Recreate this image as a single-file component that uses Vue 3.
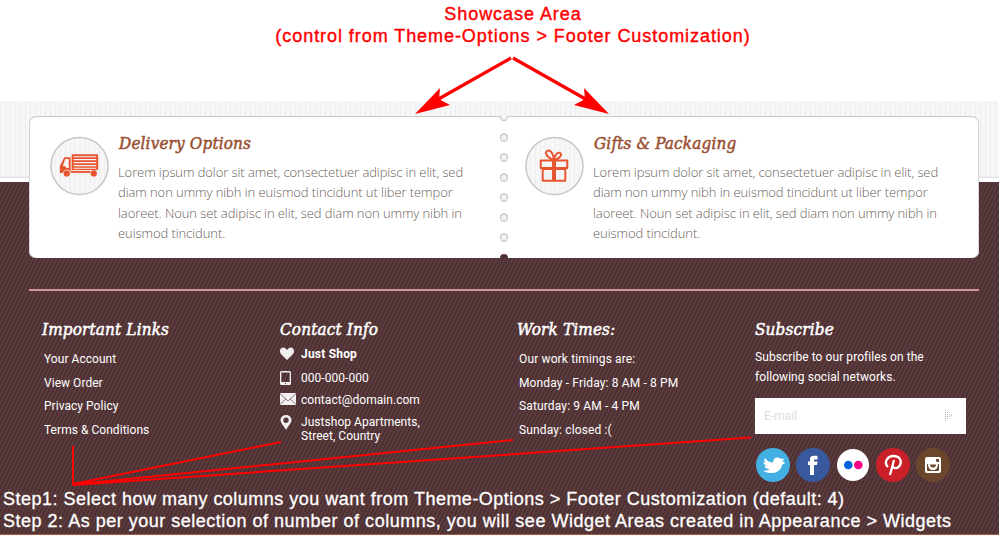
<script setup>
const features = [
  {
    icon: 'truck',
    title: 'Delivery Options',
  },
  {
    icon: 'gift',
    title: 'Gifts & Packaging',
  },
]
const copy = [
  'Lorem ipsum dolor sit amet, consectetuer adipisc in elit, sed',
  'diam non ummy nibh in euismod tincidunt ut liber tempor',
  'laoreet. Noun set adipisc in elit, sed diam non ummy nibh in',
  'euismod tincidunt.',
]
const links = ['Your Account', 'View Order', 'Privacy Policy', 'Terms & Conditions']
const times = ['Our work timings are:', 'Monday - Friday: 8 AM - 8 PM', 'Saturday: 9 AM - 4 PM', 'Sunday: closed :(']
</script>

<template>
  <div class="page">
    <header class="note">
      <p class="n1">Showcase Area</p>
      <p class="n2">(control from Theme-Options &gt; Footer Customization)</p>
    </header>

    <section class="band">
      <svg class="texture" width="999" height="434" aria-hidden="true">
        <defs>
          <pattern id="ribs" width="10" height="8" patternUnits="userSpaceOnUse">
            <rect width="10" height="8" fill="#f6f6f6" />
            <path d="M.5 0v8M5.5 0v8" stroke="#eeeeee" />
            <path d="M1 2l4 4M6 5l3 3M7 0l3 2" stroke="#fbfbfb" />
          </pattern>
          <pattern id="twill" width="4" height="8" patternUnits="userSpaceOnUse">
            <rect width="4" height="8" fill="#4f3032" />
            <path d="M3 0h1v2h-1zM2 2h1v2h-1zM1 4h1v2h-1zM0 6h1v2h-1z" fill="#5d4042" />
            <path d="M2 0h1v2h-1zM1 2h1v2h-1zM0 4h1v2h-1zM3 6h1v2h-1z" fill="#57393b" />
          </pattern>
        </defs>
        <rect width="999" height="77" fill="url(#ribs)" />
        <rect y="75" width="999" height="1" fill="#eeeeee" />
        <rect y="76" width="999" height="1" fill="#e0e0e0" />
        <rect y="77" width="999" height="4" fill="#fff" />
        <rect y="81" width="999" height="352" fill="url(#twill)" />
        <rect y="433" width="999" height="1" fill="#a5583f" />
      </svg>

      <div class="card">
        <article v-for="f in features" :key="f.title" class="feature">
          <svg v-if="f.icon === 'truck'" class="badge" viewBox="0 0 60 60">
            <circle cx="30" cy="30" r="29" fill="url(#ribs)" stroke="#cbc4c4" stroke-width="1.5" />
            <g fill="#e95430">
              <path fill-rule="evenodd" d="M22 18.500Q22 18 22.500 18H48Q49 18 49 19V33Q49 34 48 34H22ZM24 20V21.200H47V20ZM24 23V24.200H47V23ZM24 26V27.200H47V26ZM24 29V30.200H47V29ZM24 31.700V32.700H47V31.700Z" />
              <path fill-rule="evenodd" d="M14.500 21H20Q21 21 21 22V35.500H20.500A4 4 0 0 0 13.500 36L12.500 37H10V30ZM15.500 23L13 30H15L17 32H19V23Z" />
              <path d="M21 35H41V37H21Z" /><circle cx="17" cy="37.500" r="3.200" /><circle cx="44.500" cy="37.500" r="3.200" />
            </g>
          </svg>
          <svg v-else class="badge" viewBox="0 0 60 60">
            <circle cx="30" cy="30" r="29" fill="url(#ribs)" stroke="#cbc4c4" stroke-width="1.5" />
            <g fill="none" stroke="#e95430" stroke-width="2" stroke-linejoin="round">
              <path d="M16 24.500H43V32H16ZM18 33V45H41V33Z" />
              <path d="M29.500 24V45" stroke-width="4" />
              <path d="M29.500 24C26 23 20.500 19 21.500 16C23.500 12 28.500 15 29.500 24C30 18 35 14.500 36.500 17.500C37.500 20.500 33 23 29.500 24" />
            </g>
          </svg>
          <div>
            <h2>{{ f.title }}</h2>
            <p class="copy"><span v-for="line in copy" :key="line">{{ line }}</span></p>
          </div>
        </article>
        <svg class="holes" width="10" height="142" viewBox="0 0 10 142" aria-hidden="true">
          <circle cx="5" cy="1" r="3.500" fill="#f3f3f3" stroke="#cdc9c9" stroke-width="1.300" />
          <circle v-for="n in 6" :key="n" cx="5" :cy="1.5 + n * 20" r="3.500" fill="#f6f2f2" stroke="#cac6c6" stroke-width="1.300" />
          <circle cx="5" cy="142" r="4" fill="#4e2f31" />
        </svg>
      </div>

      <div class="columns">
        <section>
          <h3>Important Links</h3>
          <ul class="list"><li v-for="l in links" :key="l"><span>{{ l }}</span></li></ul>
        </section>

        <section>
          <h3>Contact Info</h3>
          <ul class="contact">
            <li class="shop">
              <svg width="16" height="14" viewBox="0 0 16 14"><path d="M7 13L1 7C-2 3 2-1 5 1L7 3L9 1C12-1 16 3 13 7Z" fill="#f1efef" /></svg>
              <strong>Just Shop</strong>
            </li>
            <li class="phone">
              <svg width="16" height="14" viewBox="0 0 16 14"><path fill-rule="evenodd" d="M1.500 0H9.500Q11 0 11 1.500V12.500Q11 14 9.500 14H1.500Q0 14 0 12.500V1.500Q0 0 1.500 0ZM1.300 1.500V11H9.700V1.500ZM5 12V13H6V12Z" fill="#f1efef" /></svg>
              <span>000-000-000</span>
            </li>
            <li class="mail">
              <svg width="16" height="12" viewBox="0 0 16 12"><path d="M0 0H16V12H0Z" fill="#f1efef" /><path d="M0 .5L8 8L16 .5M0 11.500L6 6M16 11.500L10 6" fill="none" stroke="#8d7779" /></svg>
              <span>contact@domain.com</span>
            </li>
            <li class="place">
              <svg width="16" height="15" viewBox="0 0 16 15"><path fill-rule="evenodd" d="M6 15C4 11 .5 8 .5 5A5.500 5 0 0 1 11.500 5C11.500 8 8 11 6 15ZM6 2.500A2.700 2.700 0 1 0 6 7.900A2.700 2.700 0 1 0 6 2.500Z" fill="#f1efef" /></svg>
              <span>Justshop Apartments,<br />Street, Country</span>
            </li>
          </ul>
        </section>

        <section>
          <h3>Work Times:</h3>
          <ul class="list times"><li v-for="t in times" :key="t"><span>{{ t }}</span></li></ul>
        </section>

        <section>
          <h3>Subscribe</h3>
          <p class="lead">Subscribe to our profiles on the<br />following social networks.</p>
          <div class="field">
            <span>E-mail</span>
            <svg width="8" height="12" viewBox="0 0 8 12" fill="#b9b5b5">
              <path d="M0 0h1v1h-1zM0 2h1v1h-1zM2 2h1v1h-1zM0 4h1v1h-1zM2 4h1v1h-1zM4 4h1v1h-1zM0 6h1v1h-1zM2 6h1v1h-1zM4 6h1v1h-1zM0 8h1v1h-1zM2 8h1v1h-1zM0 10h1v1h-1zM6 5h1v1h-1z" />
            </svg>
          </div>
          <div class="social">
            <svg viewBox="0 0 34 34"><circle cx="17" cy="17" r="17" fill="#43afe3" /><path d="M9 10C11 13 14 14.500 17 14.500C17 9.500 22 8 25 11L28.500 10.500L26.500 13L29 15L26 17C25 24 16 28 6.500 22.500C10 23 12 22.500 13.500 21C10.500 21 9 20 8.500 18H11C8.500 17 7.500 16 7.500 14L9.500 14.500C8 13 8 11.500 9 10Z" fill="#fff" /></svg>
            <svg viewBox="0 0 34 34"><circle cx="17" cy="17" r="17" fill="#39599f" /><path d="M14 27V17H12V13.500H14V11C14 8 16 7.500 21.500 8V11.500H19C18 11.500 18 12 18 13.500H21.500L21 17H18V27Z" fill="#fff" /></svg>
            <svg viewBox="0 0 34 34"><circle cx="17" cy="17" r="16" fill="#fff" /><circle cx="12.300" cy="17" r="4.300" fill="#0063db" /><circle cx="22.300" cy="17" r="4.300" fill="#ff0084" /></svg>
            <svg viewBox="0 0 34 34"><circle cx="17" cy="17" r="17" fill="#cb2027" /><path d="M12 19C7.500 15 11 8 17.500 8C24 8 26 13 24 17C22 21 18 21 16.500 18M18 12L14 27" fill="none" stroke="#fff" stroke-width="2.300" /></svg>
            <svg viewBox="0 0 34 34">
              <circle cx="17" cy="17" r="17" fill="#6b462c" />
              <rect x="9" y="9" width="16" height="16" rx="2" fill="#fff" />
              <path d="M11 16H12.500A4.700 4.700 0 1 0 21.500 16H23V22Q23 23 22 23H12Q11 23 11 22ZM20 11H23V14H20Z" fill="#6b462c" />
              <circle cx="17" cy="17" r="4.800" fill="#fff" /><path d="M14 16.500A3 3 0 0 0 20 16.500Z" fill="#6b462c" />
            </svg>
          </div>
        </section>
      </div>

      <footer class="steps">
        <p>Step1: Select how many columns you want from Theme-Options &gt; Footer Customization (default: 4)</p>
        <p class="s2">Step 2: As per your selection of number of columns, you will see Widget Areas created in Appearance &gt; Widgets</p>
      </footer>
    </section>

    <svg class="arrows" width="999" height="535" viewBox="0 0 999 535" aria-hidden="true">
      <path d="M511 58L435 101M513 58L589 101" fill="none" stroke="#f00" stroke-width="3.200" />
      <path d="M415 114L440 88L439 99L450 105ZM609 114L584 88L585 99L574 105Z" fill="#f00" />
      <path d="M73 446V484L281 442M73 484.500L513 440M73 485L751 437.500" fill="none" stroke="#f00" stroke-width="2" />
    </svg>
  </div>
</template>

<style>
body { margin: 0; background: #fff; overflow: hidden; }
</style>

<style scoped>
* { box-sizing: border-box; }
p, h2, h3, ul { margin: 0; padding: 0; font-weight: normal; }
ul { list-style: none; }
svg { display: block; flex: none; }
.page { position: relative; width: 999px; height: 535px; overflow: hidden; font: 12px/14px Roboto, sans-serif; letter-spacing: .04px; white-space: nowrap; }
.note { height: 101px; padding-top: 3px; padding-left: 27px; text-align: center; font: 18px/22px "Liberation Sans", sans-serif; color: #f00; -webkit-text-stroke: .4px #f00; }
.n1 { letter-spacing: .95px; }
.n2 { letter-spacing: .94px; }
.band { position: relative; height: 434px; padding: 15px 20px 0 29px; }
.texture { position: absolute; left: 0; top: 0; }
.card { position: relative; display: grid; grid-template-columns: 475px 475px; width: 950px; height: 142px; border-top: 1px solid #cbc7c7; border-radius: 7px; background: #fff; box-shadow: inset 1px 0 0 #d8d4d4, inset -1px 0 0 #d8d4d4; }
.feature { display: flex; gap: 9px; padding: 19px 0 0 21px; }
.badge { width: 59px; height: 60px; }
h2, h3 { font: italic 17px/22px "DejaVu Serif Condensed", "DejaVu Serif", serif; font-stretch: condensed; letter-spacing: .14px; -webkit-text-stroke: .5px currentColor; }
h2 { margin-top: -4px; padding-left: 1px; color: #9a5032; }
.copy { margin-top: 8px; font: 300 13px/20.300px "Open Sans", sans-serif; letter-spacing: -.08px; color: #6b6058; }
.copy span { display: block; }
.holes { position: absolute; left: 470px; top: -1px; }
.columns { position: relative; display: grid; grid-template-columns: 238px 237px 238px 237px; width: 950px; height: 198px; margin-top: 31px; padding: 27px 0 0 13px; border-top: 2px solid #d2959a; color: #fff; }
.list { padding: 8px 0 0 2px; line-height: 23.700px; }
.times { letter-spacing: .14px; }
.contact { display: flex; flex-direction: column; padding-top: 7px; }
.contact li { display: flex; gap: 5px; }
.shop { height: 24px; }
.shop strong { letter-spacing: .2px; }
.phone { height: 22px; }
.mail { height: 22px; }
.lead { padding-top: 7px; line-height: 20px; letter-spacing: .07px; }
.field { display: flex; align-items: center; justify-content: space-between; width: 211px; height: 36px; margin-top: 11px; padding: 0 13px 0 9px; background: #fff; color: #ddd; font-size: 12px; }
.social { display: flex; gap: 6px; margin: 14px 0 0 1px; }
.social svg { width: 34px; height: 34px; }
.steps { position: relative; margin: 1px 0 0 -26px; color: #fff; font: 18px/22px "Liberation Sans", sans-serif; letter-spacing: .49px; -webkit-text-stroke: .3px #fff; }
.s2 { letter-spacing: .51px; }
.arrows { position: absolute; left: 0; top: 0; }
</style>
